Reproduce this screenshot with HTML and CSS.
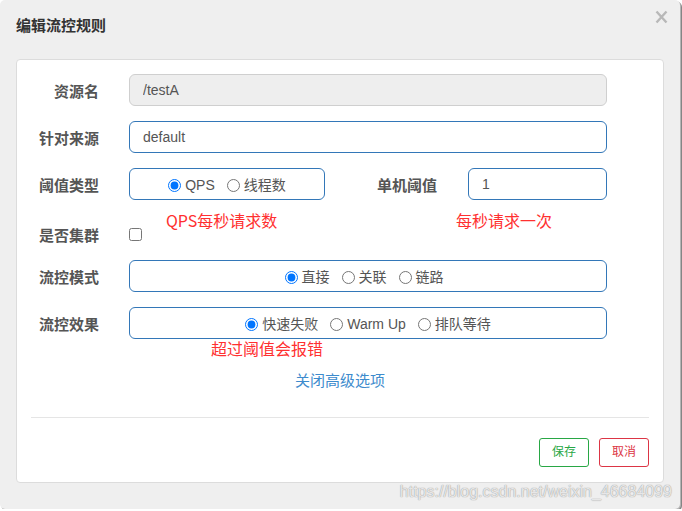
FILE: index.html
```html
<!DOCTYPE html>
<html lang="zh-CN">
<head>
<meta charset="utf-8">
<title>编辑流控规则</title>
<link rel="stylesheet" href="styles.css">
</head>
<body>
<div class="dialog">
  <div class="dlg-header">
    <h4 class="dlg-title">编辑流控规则</h4>
    <svg class="close" width="13" height="14" viewBox="0 0 13 14"><path d="M1.5 1.5 L11.5 12.5 M11.5 1.5 L1.5 12.5" stroke="#b8b8b8" stroke-width="2.4" fill="none"/></svg>
  </div>
  <div class="panel">
    <div class="form-row">
      <label class="lbl">资源名</label>
      <input class="input input-disabled" type="text" value="/testA" disabled>
    </div>
    <div class="form-row">
      <label class="lbl">针对来源</label>
      <input class="input" type="text" value="default">
    </div>
    <div class="form-row">
      <label class="lbl">阈值类型</label>
      <div class="split">
        <div class="box box-qps">
          <label class="opt"><input type="radio" name="grade" checked>QPS</label>
          <label class="opt"><input type="radio" name="grade">线程数</label>
        </div>
        <label class="lbl lbl-inner">单机阈值</label>
        <input class="input input-small" type="text" value="1">
      </div>
    </div>
    <div class="form-row row-cluster">
      <label class="lbl">是否集群</label>
      <div class="check-wrap"><input class="check" type="checkbox"></div>
    </div>
    <div class="form-row">
      <label class="lbl">流控模式</label>
      <div class="box box-shift">
        <label class="opt"><input type="radio" name="strategy" checked>直接</label>
        <label class="opt"><input type="radio" name="strategy">关联</label>
        <label class="opt"><input type="radio" name="strategy">链路</label>
      </div>
    </div>
    <div class="form-row">
      <label class="lbl">流控效果</label>
      <div class="box">
        <label class="opt"><input type="radio" name="behavior" checked>快速失败</label>
        <label class="opt"><input type="radio" name="behavior">Warm Up</label>
        <label class="opt"><input type="radio" name="behavior">排队等待</label>
      </div>
    </div>
    <div class="advanced"><a class="adv-link">关闭高级选项</a></div>
    <div class="sep"></div>
    <div class="footer">
      <button class="btn btn-save">保存</button>
      <button class="btn btn-cancel">取消</button>
    </div>
    <span class="note note-qps">QPS每秒请求数</span>
    <span class="note note-once">每秒请求一次</span>
    <span class="note note-error">超过阈值会报错</span>
  </div>
  <div class="watermark">https://blog.csdn.net/weixin_46684099</div>
</div>
</body>
</html>
```
FILE: styles.css
```css
* { box-sizing: border-box; }
html, body { margin: 0; padding: 0; background: #ffffff; }
body {
  font-family: "Liberation Sans", "Noto Sans CJK SC", sans-serif;
  font-size: 14px;
  color: #555;
}
.dialog {
  position: relative;
  width: 680px;
  height: 509px;
  background: #efefef;
  border-radius: 5px;
  box-shadow: 1px 1px 0 #b5b5b5, 2px 2px 0 #858585;
}
.dlg-header {
  height: 59px;
  padding: 16px 12px 0 16px;
  display: flex;
  justify-content: space-between;
  align-items: flex-start;
}
.dlg-title {
  margin: 0;
  font-size: 15px;
  line-height: 20px;
  font-weight: bold;
  color: #333;
}
.close { margin-top: -6px; }
.panel {
  position: relative;
  margin: 0 16px;
  height: 424px;
  background: #fff;
  border: 1px solid #dcdcdc;
  border-radius: 4px;
  padding: 14px 14px 15px 14px;
  display: flex;
  flex-direction: column;
}
.form-row {
  display: grid;
  grid-template-columns: 68px 478px;
  column-gap: 30px;
  align-items: center;
  height: 32px;
  margin-bottom: 15px;
}
.row-cluster { height: 38px; margin-bottom: 7px; }
.lbl {
  text-align: right;
  font-size: 15px;
  font-weight: bold;
  color: #555;
  line-height: 20px;
  padding-top: 4px;
  white-space: nowrap;
}
.input {
  height: 32px;
  width: 100%;
  border: 1px solid #3377b8;
  border-radius: 6px;
  padding: 0 13px;
  font-family: "Liberation Sans", "Noto Sans CJK SC", sans-serif;
  font-size: 14px;
  color: #555;
  background: #fff;
  outline: none;
}
.input-disabled {
  background: #eee;
  border-color: #cfcfcf;
  color: #555;
  -webkit-text-fill-color: #555;
}
.split {
  display: flex;
  align-items: center;
  height: 32px;
}
.box {
  height: 32px;
  border: 1px solid #3377b8;
  border-radius: 6px;
  display: flex;
  justify-content: center;
  align-items: center;
  gap: 12px;
  padding-top: 2px;
}
.box-shift { padding-right: 8px; }
.box-qps { width: 196px; flex: none; }
.lbl-inner { width: 112px; flex: none; }
.input-small { width: 139px; flex: none; margin-left: 31px; }
.opt {
  display: inline-flex;
  align-items: center;
  font-size: 14px;
  line-height: 18px;
  color: #555;
}
.opt input {
  margin: 0 4px 0 0;
  width: 13px;
  height: 13px;
}
.check-wrap { display: flex; align-items: center; height: 38px; }
.check { margin: 0; width: 13px; height: 13px; }
.advanced {
  margin-top: 17px;
  text-align: center;
  line-height: 20px;
}
.adv-link {
  font-size: 15px;
  color: #3d8bcd;
  cursor: pointer;
}
.sep {
  margin-top: 26px;
  height: 1px;
  background: #e5e5e5;
}
.footer {
  margin-top: 20px;
  display: flex;
  justify-content: flex-end;
  gap: 10px;
}
.btn {
  height: 29px;
  width: 50px;
  padding: 0;
  border-radius: 3px;
  background: #fff;
  font-family: "Liberation Sans", "Noto Sans CJK SC", sans-serif;
  font-size: 12px;
  line-height: 27px;
}
.btn-save { border: 1px solid #28a745; color: #28a745; }
.btn-cancel { border: 1px solid #dc3545; color: #dc3545; }
.note {
  position: absolute;
  font-family: "Noto Sans CJK SC", sans-serif;
  font-size: 16px;
  line-height: 20px;
  color: #ff3030;
  white-space: nowrap;
}
.note-qps { left: 149px; top: 150px; }
.note-once { left: 439px; top: 150px; }
.note-error { left: 194px; top: 278px; }
.watermark {
  position: absolute;
  right: 8px;
  top: 482px;
  font-family: "Liberation Sans", sans-serif;
  font-size: 16px;
  line-height: 20px;
  color: rgba(255, 255, 255, 0.75);
  text-shadow: 0 0 1px #9a9a9a, 0 0 1px #b0b0b0;
  white-space: nowrap;
}
```
